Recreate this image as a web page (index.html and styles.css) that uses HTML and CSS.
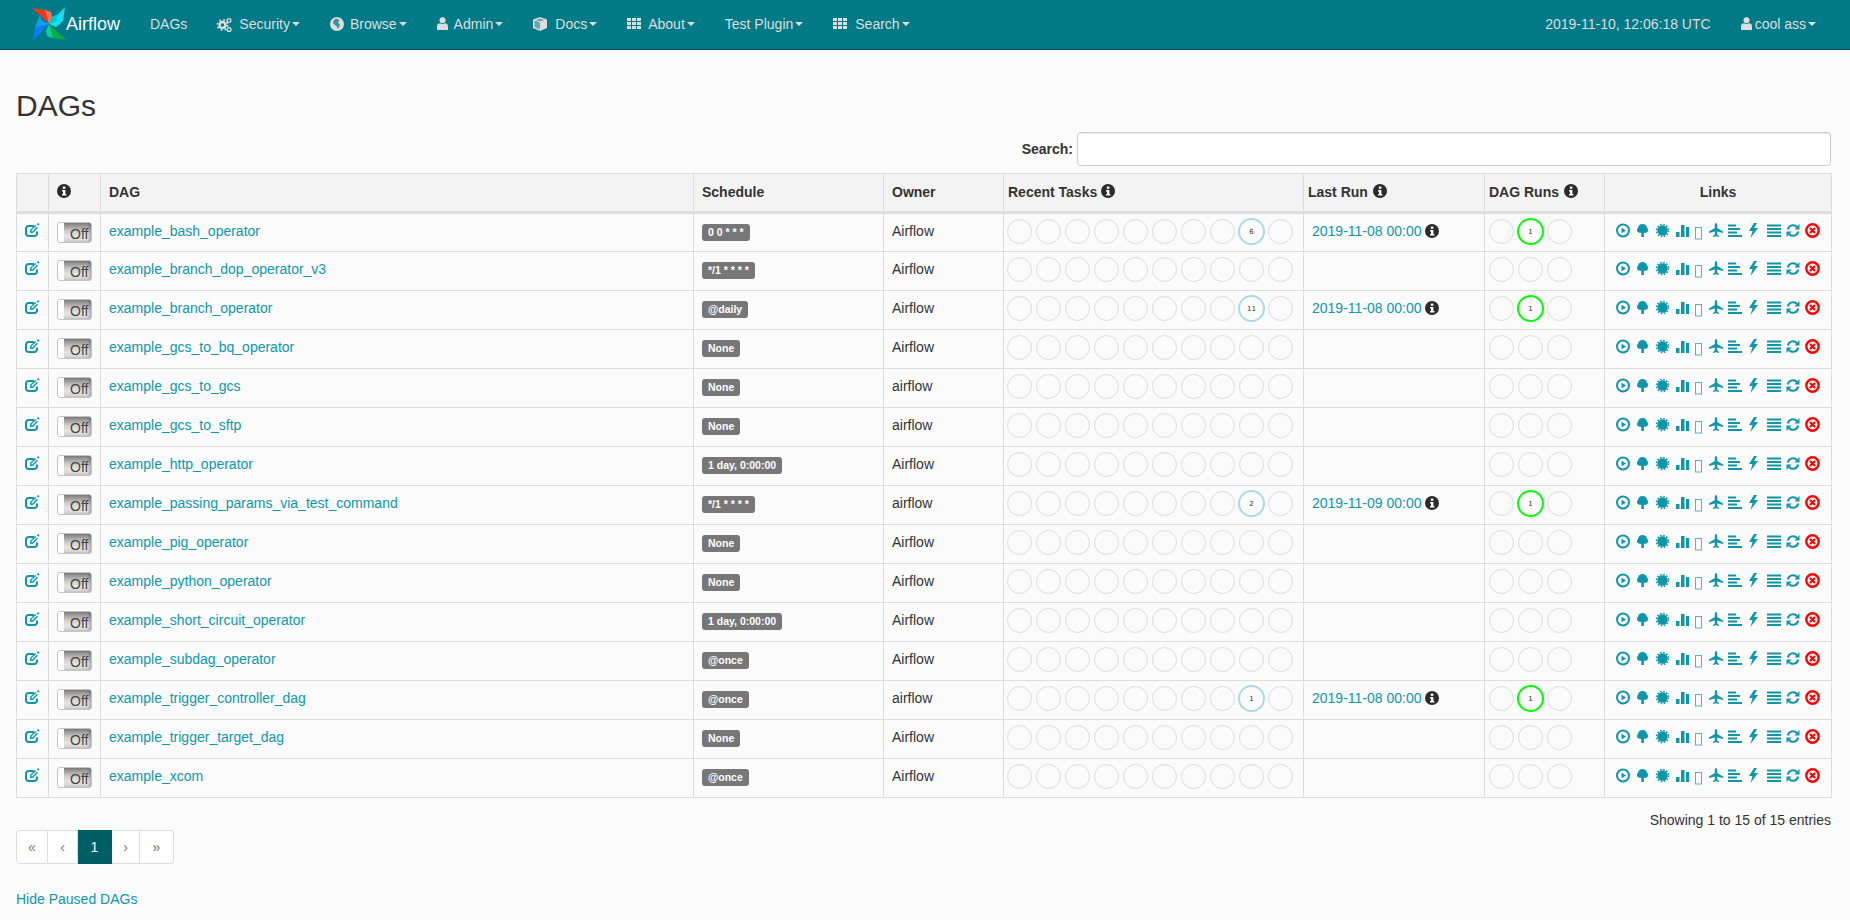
FILE: index.html
```html
<!DOCTYPE html>
<html lang="en">
<head>
<meta charset="utf-8">
<title>DAGs - Airflow</title>
<link rel="stylesheet" href="styles.css">
</head>
<body>
<svg class="defs" aria-hidden="true"><defs>
<g id="cogs"><circle cx="5.5" cy="8" r="3" fill="none" stroke="currentColor" stroke-width="2.6"/><circle cx="5.5" cy="8" r="5.2" fill="none" stroke="currentColor" stroke-width="1.6" stroke-dasharray="1.8 2.3"/><circle cx="12" cy="3.5" r="1.9" fill="none" stroke="currentColor" stroke-width="1.4"/><circle cx="12" cy="12.5" r="1.9" fill="none" stroke="currentColor" stroke-width="1.4"/></g>
<g id="globe"><circle cx="7" cy="7" r="7" fill="currentColor"/><path d="M6 1.5 9.5 3 8 5.5 10 8 8 12 6.5 9 3.5 7 3 4z" fill="#007A87" opacity=".75"/></g>
<g id="user"><circle cx="5.5" cy="3.2" r="3" fill="currentColor"/><path d="M0 13V9.5C0 7.5 1.5 6.3 3 6.3c1.5 1 3.5 1 5 0 1.5 0 3 1.2 3 3.2V13z" fill="currentColor"/></g>
<g id="cube"><path d="M7 0 14 2.6V11L7 14 0 11V2.6z" fill="currentColor"/><path d="M1.5 3.6 7 5.6V12.4L1.5 10.1zM7 1.4 11.5 3 7 4.6 2.5 3z" fill="#007A87" opacity=".55"/></g>
<g id="th" fill="currentColor"><rect width="4" height="3"/><rect x="5" width="4" height="3"/><rect x="10" width="4" height="3"/><rect y="4" width="4" height="3"/><rect x="5" y="4" width="4" height="3"/><rect x="10" y="4" width="4" height="3"/><rect y="8" width="4" height="3"/><rect x="5" y="8" width="4" height="3"/><rect x="10" y="8" width="4" height="3"/></g>
<g id="info"><circle cx="7" cy="7" r="7" fill="#2b2b2b"/><rect x="5.8" y="2.6" width="2.6" height="2.2" fill="#fff"/><path d="M5 6h3.4v4H9.4v1.5H5V10h1V7.5H5z" fill="#fff"/></g>
<g id="edit" fill="none" stroke="currentColor" stroke-width="2"><path d="M12 8.500V10.500a2.500 2.500 0 0 1-2.500 2.500H3.500A2.500 2.500 0 0 1 1 10.500V5.500A2.500 2.500 0 0 1 3.500 3H9"/><path d="M5.500 9.200 6 6.800 10.800 2.400M5.200 9.500 7.800 9 12.400 4.200" stroke-width="1.400"/><path d="M12.500 2 13.800 .6" stroke-width="2"/></g>
<g id="play"><circle cx="7" cy="8.500" r="6" fill="none" stroke="currentColor" stroke-width="2"/><path d="M5.500 5.700 10 8.500 5.500 11.300z" fill="currentColor"/></g>
<g id="tree" fill="currentColor"><circle cx="5.500" cy="6.500" r="4.500"/><circle cx="2.800" cy="8" r="2.800"/><circle cx="8.200" cy="8" r="2.800"/><rect x="4.300" y="9" width="2.600" height="6"/></g>
<g id="burst"><circle cx="7.500" cy="8.500" r="5.200" fill="currentColor"/><circle cx="7.500" cy="8.500" r="6" fill="none" stroke="currentColor" stroke-width="1.600" stroke-dasharray="1.570 1.570"/></g>
<g id="bars" fill="currentColor"><rect y="10" width="3.500" height="5"/><rect x="5" y="3" width="3.500" height="12"/><rect x="10" y="5" width="3.200" height="10"/></g>
<g id="nog"><rect x=".5" y="5.500" width="6" height="11.500" fill="none" stroke="currentColor" stroke-opacity=".7"/></g>
<g id="plane"><path d="M7 1c1 0 1.200 1.500 1.200 2.500V6L14 9.500V11L8.200 9.500v3L10 14v1l-3-.8L4 15v-1l1.800-1.500v-3L0 11V9.500L5.800 6V3.500C5.800 2.500 6 1 7 1z" fill="currentColor"/></g>
<g id="aleft" fill="currentColor"><rect y="2.500" width="8" height="2"/><rect y="6" width="12" height="2"/><rect y="9.500" width="9" height="2"/><rect y="13" width="14" height="2"/></g>
<g id="bolt"><path d="M6 1 1 9h3.500L2.500 16 10 6H6l3-5z" fill="currentColor"/></g>
<g id="ajust" fill="currentColor"><rect y="2.500" width="14" height="2"/><rect y="6" width="14" height="2"/><rect y="9.500" width="14" height="2"/><rect y="13" width="14" height="2"/></g>
<g id="refresh"><path d="M1.800 7.500A5.300 5.300 0 0 1 11 5M12.200 9.500A5.300 5.300 0 0 1 3 12" fill="none" stroke="currentColor" stroke-width="2"/><path d="M13.500 2V7.500H8.500zM.5 15V9.500H5.500z" fill="currentColor"/></g>
<g id="del"><circle cx="7.500" cy="8.500" r="6.200" fill="#fff" stroke="#f00" stroke-width="2.400"/><path d="M5 6 10 11M10 6 5 11" stroke="#f00" stroke-width="2.200"/></g>
<symbol id="links" overflow="visible"><use href="#play"/><use href="#tree" x="21"/><use href="#burst" x="39"/><use href="#bars" x="60"/><use href="#nog" x="79"/><use href="#plane" x="93"/><use href="#aleft" x="112"/><use href="#bolt" x="132"/><use href="#ajust" x="151"/><use href="#refresh" x="170"/><use href="#del" x="189"/></symbol>
</defs></svg>

<nav class="navbar">
  <a class="brand">
    <svg class="logo" viewBox="0 0 34 34">
      <path d="M0 1 14 3 20 10 17 17z" fill="#e43921"/><path d="M13 3 19 5 20 10 17 17z" fill="#ff7557"/>
      <path d="M33 0 31 14 24 20 17 17z" fill="#11e1ee"/><path d="M17 17 20 10 26 7 24 14z" fill="#00c7d4"/>
      <path d="M34 33 20 31 14 24 17 17z" fill="#00ad46"/><path d="M21 31 15 29 14 24 17 17z" fill="#04d1a0"/>
      <path d="M1 34 3 20 10 14 17 17z" fill="#0b7ff0"/><path d="M17 17 10 14 8 8 3 20z" fill="#11a7f5" opacity=".85"/>
    </svg>
    <span class="wordmark">Airflow</span>
  </a>
  <ul class="menu">
    <li><a>DAGs</a></li>
    <li><a><svg class="ni w22"><use href="#cogs" y="1"/></svg>Security<b class="caret"></b></a></li>
    <li><a><svg class="ni w20"><use href="#globe" y="1"/></svg>Browse<b class="caret"></b></a></li>
    <li><a><svg class="ni w17"><use href="#user" y="1"/></svg>Admin<b class="caret"></b></a></li>
    <li><a><svg class="ni w22"><use href="#cube" y="1"/></svg>Docs<b class="caret"></b></a></li>
    <li><a><svg class="ni w21"><use href="#th" y="2"/></svg>About<b class="caret"></b></a></li>
    <li><a>Test Plugin<b class="caret"></b></a></li>
    <li><a><svg class="ni w22"><use href="#th" y="2"/></svg>Search<b class="caret"></b></a></li>
  </ul>
  <div class="nav-right">
    <span class="clock">2019-11-10, 12:06:18 UTC</span>
    <a class="account"><svg class="ni w14"><use href="#user" y="1"/></svg>cool ass<b class="caret"></b></a>
  </div>
</nav>

<main class="container">
  <h2 class="title">DAGs</h2>
  <div class="search"><label>Search:</label><input type="search"></div>
  <table class="dags">
    <colgroup><col class="c1"><col class="c2"><col class="c3"><col class="c4"><col class="c5"><col class="c6"><col class="c7"><col class="c8"><col class="c9"></colgroup>
    <thead><tr>
      <th></th>
      <th><svg class="inf"><use href="#info"/></svg></th>
      <th>DAG</th>
      <th>Schedule</th>
      <th>Owner</th>
      <th class="tight">Recent Tasks <svg class="inf"><use href="#info"/></svg></th>
      <th class="tight nudge">Last Run <svg class="inf"><use href="#info"/></svg></th>
      <th class="tight nudge">DAG Runs <svg class="inf"><use href="#info"/></svg></th>
      <th class="center">Links</th>
    </tr></thead>
    <tbody>
      <tr><td><svg class="edit"><use href="#edit"/></svg></td><td><span class="toggle"><span>Off</span></span></td><td><a>example_bash_operator</a></td><td><span class="label">0 0 * * *</span></td><td>Airflow</td><td><div class="rings"><i></i><i></i><i></i><i></i><i></i><i></i><i></i><i></i><i class="blue">6</i><i></i></div></td><td><div class="run"><a>2019-11-08 00:00</a><svg class="inf"><use href="#info"/></svg></div></td><td><div class="rings runs"><i></i><i class="green">1</i><i></i></div></td><td><svg class="links"><use href="#links"/></svg></td></tr>
      <tr><td><svg class="edit"><use href="#edit"/></svg></td><td><span class="toggle"><span>Off</span></span></td><td><a>example_branch_dop_operator_v3</a></td><td><span class="label">*/1 * * * *</span></td><td>Airflow</td><td><div class="rings"><i></i><i></i><i></i><i></i><i></i><i></i><i></i><i></i><i></i><i></i></div></td><td></td><td><div class="rings runs"><i></i><i></i><i></i></div></td><td><svg class="links"><use href="#links"/></svg></td></tr>
      <tr><td><svg class="edit"><use href="#edit"/></svg></td><td><span class="toggle"><span>Off</span></span></td><td><a>example_branch_operator</a></td><td><span class="label">@daily</span></td><td>Airflow</td><td><div class="rings"><i></i><i></i><i></i><i></i><i></i><i></i><i></i><i></i><i class="blue">11</i><i></i></div></td><td><div class="run"><a>2019-11-08 00:00</a><svg class="inf"><use href="#info"/></svg></div></td><td><div class="rings runs"><i></i><i class="green">1</i><i></i></div></td><td><svg class="links"><use href="#links"/></svg></td></tr>
      <tr><td><svg class="edit"><use href="#edit"/></svg></td><td><span class="toggle"><span>Off</span></span></td><td><a>example_gcs_to_bq_operator</a></td><td><span class="label">None</span></td><td>Airflow</td><td><div class="rings"><i></i><i></i><i></i><i></i><i></i><i></i><i></i><i></i><i></i><i></i></div></td><td></td><td><div class="rings runs"><i></i><i></i><i></i></div></td><td><svg class="links"><use href="#links"/></svg></td></tr>
      <tr><td><svg class="edit"><use href="#edit"/></svg></td><td><span class="toggle"><span>Off</span></span></td><td><a>example_gcs_to_gcs</a></td><td><span class="label">None</span></td><td>airflow</td><td><div class="rings"><i></i><i></i><i></i><i></i><i></i><i></i><i></i><i></i><i></i><i></i></div></td><td></td><td><div class="rings runs"><i></i><i></i><i></i></div></td><td><svg class="links"><use href="#links"/></svg></td></tr>
      <tr><td><svg class="edit"><use href="#edit"/></svg></td><td><span class="toggle"><span>Off</span></span></td><td><a>example_gcs_to_sftp</a></td><td><span class="label">None</span></td><td>airflow</td><td><div class="rings"><i></i><i></i><i></i><i></i><i></i><i></i><i></i><i></i><i></i><i></i></div></td><td></td><td><div class="rings runs"><i></i><i></i><i></i></div></td><td><svg class="links"><use href="#links"/></svg></td></tr>
      <tr><td><svg class="edit"><use href="#edit"/></svg></td><td><span class="toggle"><span>Off</span></span></td><td><a>example_http_operator</a></td><td><span class="label">1 day, 0:00:00</span></td><td>Airflow</td><td><div class="rings"><i></i><i></i><i></i><i></i><i></i><i></i><i></i><i></i><i></i><i></i></div></td><td></td><td><div class="rings runs"><i></i><i></i><i></i></div></td><td><svg class="links"><use href="#links"/></svg></td></tr>
      <tr><td><svg class="edit"><use href="#edit"/></svg></td><td><span class="toggle"><span>Off</span></span></td><td><a>example_passing_params_via_test_command</a></td><td><span class="label">*/1 * * * *</span></td><td>airflow</td><td><div class="rings"><i></i><i></i><i></i><i></i><i></i><i></i><i></i><i></i><i class="blue">2</i><i></i></div></td><td><div class="run"><a>2019-11-09 00:00</a><svg class="inf"><use href="#info"/></svg></div></td><td><div class="rings runs"><i></i><i class="green">1</i><i></i></div></td><td><svg class="links"><use href="#links"/></svg></td></tr>
      <tr><td><svg class="edit"><use href="#edit"/></svg></td><td><span class="toggle"><span>Off</span></span></td><td><a>example_pig_operator</a></td><td><span class="label">None</span></td><td>Airflow</td><td><div class="rings"><i></i><i></i><i></i><i></i><i></i><i></i><i></i><i></i><i></i><i></i></div></td><td></td><td><div class="rings runs"><i></i><i></i><i></i></div></td><td><svg class="links"><use href="#links"/></svg></td></tr>
      <tr><td><svg class="edit"><use href="#edit"/></svg></td><td><span class="toggle"><span>Off</span></span></td><td><a>example_python_operator</a></td><td><span class="label">None</span></td><td>Airflow</td><td><div class="rings"><i></i><i></i><i></i><i></i><i></i><i></i><i></i><i></i><i></i><i></i></div></td><td></td><td><div class="rings runs"><i></i><i></i><i></i></div></td><td><svg class="links"><use href="#links"/></svg></td></tr>
      <tr><td><svg class="edit"><use href="#edit"/></svg></td><td><span class="toggle"><span>Off</span></span></td><td><a>example_short_circuit_operator</a></td><td><span class="label">1 day, 0:00:00</span></td><td>Airflow</td><td><div class="rings"><i></i><i></i><i></i><i></i><i></i><i></i><i></i><i></i><i></i><i></i></div></td><td></td><td><div class="rings runs"><i></i><i></i><i></i></div></td><td><svg class="links"><use href="#links"/></svg></td></tr>
      <tr><td><svg class="edit"><use href="#edit"/></svg></td><td><span class="toggle"><span>Off</span></span></td><td><a>example_subdag_operator</a></td><td><span class="label">@once</span></td><td>Airflow</td><td><div class="rings"><i></i><i></i><i></i><i></i><i></i><i></i><i></i><i></i><i></i><i></i></div></td><td></td><td><div class="rings runs"><i></i><i></i><i></i></div></td><td><svg class="links"><use href="#links"/></svg></td></tr>
      <tr><td><svg class="edit"><use href="#edit"/></svg></td><td><span class="toggle"><span>Off</span></span></td><td><a>example_trigger_controller_dag</a></td><td><span class="label">@once</span></td><td>airflow</td><td><div class="rings"><i></i><i></i><i></i><i></i><i></i><i></i><i></i><i></i><i class="blue">1</i><i></i></div></td><td><div class="run"><a>2019-11-08 00:00</a><svg class="inf"><use href="#info"/></svg></div></td><td><div class="rings runs"><i></i><i class="green">1</i><i></i></div></td><td><svg class="links"><use href="#links"/></svg></td></tr>
      <tr><td><svg class="edit"><use href="#edit"/></svg></td><td><span class="toggle"><span>Off</span></span></td><td><a>example_trigger_target_dag</a></td><td><span class="label">None</span></td><td>Airflow</td><td><div class="rings"><i></i><i></i><i></i><i></i><i></i><i></i><i></i><i></i><i></i><i></i></div></td><td></td><td><div class="rings runs"><i></i><i></i><i></i></div></td><td><svg class="links"><use href="#links"/></svg></td></tr>
      <tr><td><svg class="edit"><use href="#edit"/></svg></td><td><span class="toggle"><span>Off</span></span></td><td><a>example_xcom</a></td><td><span class="label">@once</span></td><td>Airflow</td><td><div class="rings"><i></i><i></i><i></i><i></i><i></i><i></i><i></i><i></i><i></i><i></i></div></td><td></td><td><div class="rings runs"><i></i><i></i><i></i></div></td><td><svg class="links"><use href="#links"/></svg></td></tr>
    </tbody>
  </table>
  <div class="info">Showing 1 to 15 of 15 entries</div>
  <ul class="pagination">
    <li class="p1">«</li><li class="p2">‹</li><li class="p3 active">1</li><li class="p4">›</li><li class="p5">»</li>
  </ul>
  <a class="hide-paused">Hide Paused DAGs</a>
</main>
</body>
</html>
```

FILE: styles.css
```css
* { box-sizing: border-box; }
html, body { margin: 0; height: 100%; }
body {
  background: #fbfbfb;
  color: #333;
  font: 14px/20px "Liberation Sans", Arial, sans-serif;
  overflow: hidden;
}
a { color: #0f97a9; text-decoration: none; }
.defs { position: absolute; width: 0; height: 0; }

.navbar {
  display: flex;
  align-items: center;
  height: 50px;
  padding: 0 19px 1px 32px;
  background: #007a87;
  border-bottom: 1px solid #004d55;
  color: #ddd;
}
.brand { display: flex; align-items: center; width: 103px; color: #fff; }
.logo { width: 34px; height: 34px; flex: none; }
.wordmark { font-size: 18px; }
.menu { display: flex; list-style: none; margin: 0; padding: 0; }
.menu li { padding: 0 15px; }
.menu a, .account { display: flex; align-items: center; color: #ddd; }
.ni { height: 16px; flex: none; overflow: visible; color: #ddd; }
.w14 { width: 14px; }
.w17 { width: 17px; }
.w20 { width: 20px; }
.w21 { width: 21px; }
.w22 { width: 22px; }
.caret {
  width: 0; height: 0;
  margin-left: 2px;
  border-top: 4px solid #ddd;
  border-left: 4px solid transparent;
  border-right: 4px solid transparent;
}
.nav-right { display: flex; align-items: center; margin-left: auto; }
.clock { margin-right: 30px; }
.account { padding-right: 15px; }

.container { padding: 0 19px 0 16px; }
.title { margin: 39px 0 0; font-size: 30px; line-height: 33px; font-weight: 400; color: #333; }
.search { display: flex; justify-content: flex-end; align-items: center; gap: 4px; margin: 10px 0 7px; }
.search label { font-weight: 700; }
.search input {
  width: 754px; height: 34px;
  background: #fff;
  border: 1px solid #ccc;
  border-radius: 4px;
  box-shadow: inset 0 1px 1px rgba(0,0,0,.075);
}

.dags { width: 1815px; table-layout: fixed; border-collapse: collapse; }
.c1 { width: 32px; }
.c2 { width: 52px; }
.c3 { width: 593px; }
.c4 { width: 190px; }
.c5 { width: 120px; }
.c6 { width: 300px; }
.c7 { width: 181px; }
.c8 { width: 120px; }
.c9 { width: 227px; }
.dags th, .dags td { border: 1px solid #ddd; padding: 8px; text-align: left; vertical-align: top; }
.dags th { height: 39px; background: #f3f3f3; border-bottom: 3px solid #ddd; font-weight: 700; }
.dags th.center { text-align: center; }
.dags th.tight { padding-left: 4px; }
.nudge .inf { margin-left: 1px; }
.dags td { height: 39px; padding-top: 7px; padding-bottom: 0; }
.inf { display: inline-block; width: 14px; height: 14px; vertical-align: -1px; overflow: visible; }
.edit { display: block; width: 14px; height: 14px; margin-top: 2px; color: #0f97a9; overflow: visible; }
.toggle {
  display: block;
  width: 35px; height: 21px;
  margin-top: 1px;
  padding-left: 6px;
  background: #fff;
  border: 1px solid #c4c4c4;
  border-radius: 3px;
}
.toggle span {
  display: block;
  height: 19px;
  padding-left: 6px;
  line-height: 22px;
  color: #444;
  background: linear-gradient(#7f7f7f, #cfcfcf 45%, #e4e4e4 70%, #d0d0d0);
  box-shadow: inset -2px 0 2px rgba(0,0,0,.2);
  border-radius: 0 2px 2px 0;
}
.label {
  display: inline-block;
  margin-top: 3px;
  padding: 3px 6px 4px;
  border-radius: 3px;
  background: #777;
  color: #fff;
  font-size: 10.5px;
  font-weight: 700;
  line-height: 10px;
  vertical-align: top;
}
.rings { display: flex; gap: 4px; margin: -2px 0 0 -5px; }
.runs { margin-left: -4px; }
.rings i {
  display: flex; align-items: center; justify-content: center;
  width: 25px; height: 25px;
  border: 1px solid #ddd;
  border-radius: 50%;
  font: 7px "DejaVu Sans", sans-serif;
  color: #333;
}
.rings .blue, .rings .green { width: 27px; height: 27px; margin: -1px; border-width: 2px; }
.rings .blue { border-color: #add8e6; }
.rings .green { border-color: #0f0; }
.run { display: flex; align-items: flex-start; gap: 3px; }
.run .inf { margin-top: 3px; }
.links { display: block; width: 204px; height: 18px; margin: 1px 0 0 3px; color: #0f97a9; overflow: visible; }

.info { margin-top: 12px; text-align: right; }
.pagination { display: flex; margin: 0; padding: 0; list-style: none; color: #777; }
.pagination li {
  height: 34px;
  padding: 6px 0;
  text-align: center;
  border: 1px solid #ddd;
  border-left: 0;
  background: #fff;
}
.p1 { width: 32px; border-left: 1px solid #ddd !important; border-radius: 4px 0 0 4px; }
.p2 { width: 30px; }
.p3 { width: 34px; }
.p4 { width: 28px; }
.p5 { width: 34px; border-radius: 0 4px 4px 0; }
.pagination .active { background: #005e66; border-color: #005e66; color: #fff; }
.hide-paused { display: block; margin-top: 25px; }
```
